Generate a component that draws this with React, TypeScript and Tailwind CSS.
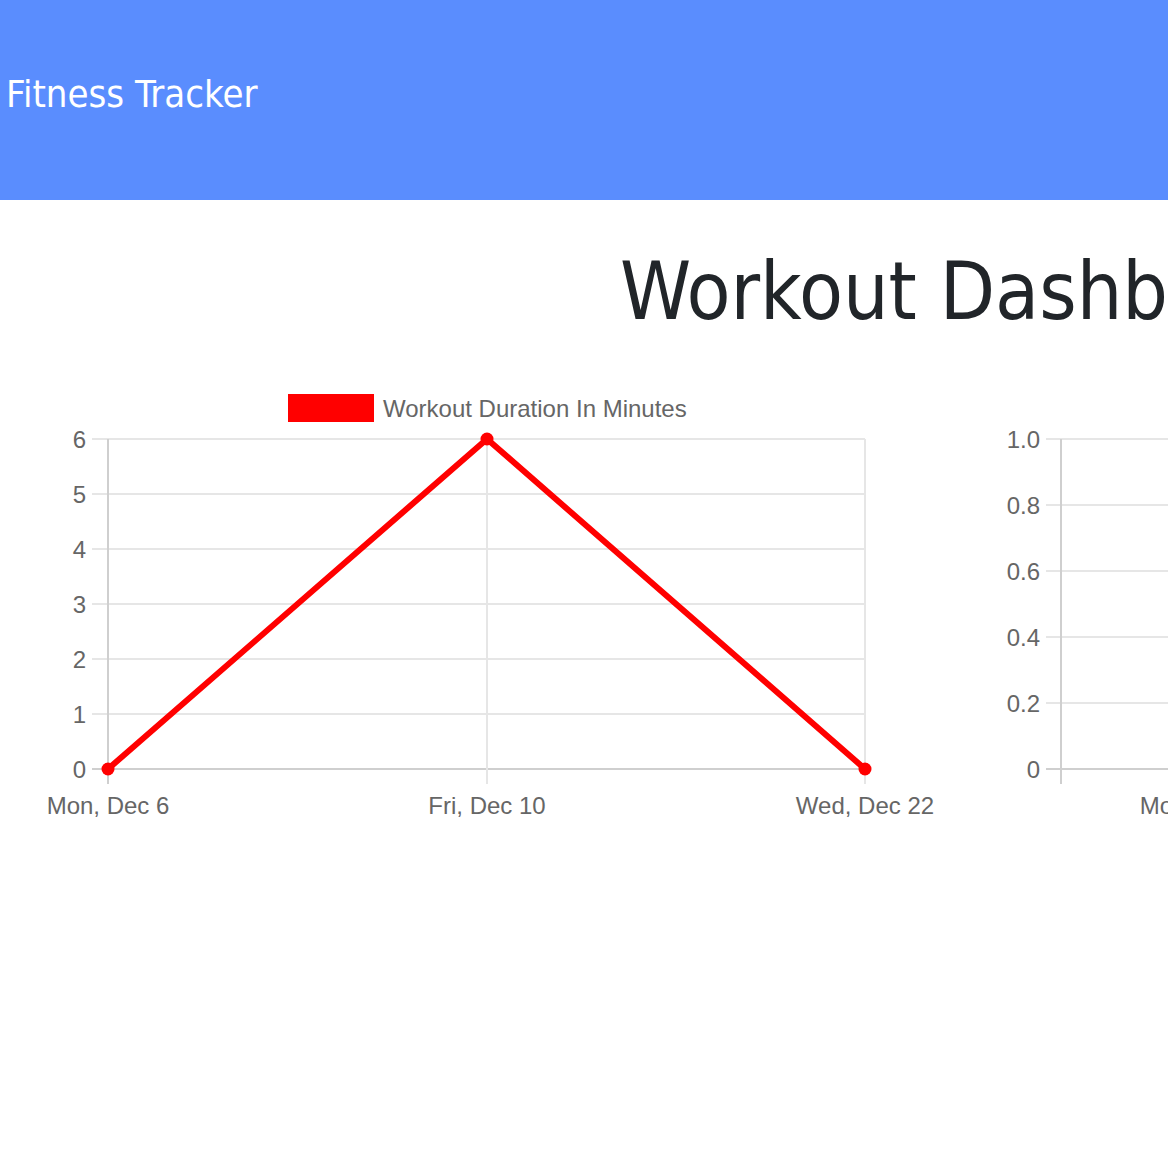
const days = ["Mon, Dec 6", "Fri, Dec 10", "Wed, Dec 22"];

const tickFont = { fontFamily: '"Liberation Sans", Arial, sans-serif', fontSize: 24, fill: "#666" };

function DurationChart() {
  const xs = [108, 487, 865];
  const ys = [0, 1, 2, 3, 4, 5, 6];
  const y = (v: number) => 769 - v * 55;
  const data = [0, 6, 0];
  const pts = data.map((v, i) => `${xs[i]},${y(v)}`).join(" ");
  return (
    <svg width={975} height={460} viewBox="0 370 975 460" className="shrink-0">
      <rect x={288} y={394} width={86} height={28} fill="#ff0000" />
      <text x={383} y={408} dominantBaseline="central" {...tickFont}>
        Workout Duration In Minutes
      </text>
      {ys.map((v) => (
        <line key={v} x1={92} x2={865} y1={y(v)} y2={y(v)} stroke={v === 0 ? "#cfcfcf" : "#e6e6e6"} strokeWidth={2} />
      ))}
      {xs.map((x, i) => (
        <line key={x} x1={x} x2={x} y1={439} y2={784} stroke={i === 0 ? "#cfcfcf" : "#e6e6e6"} strokeWidth={2} />
      ))}
      {ys.map((v) => (
        <text key={v} x={86} y={y(v)} textAnchor="end" dominantBaseline="central" {...tickFont}>
          {v}
        </text>
      ))}
      {xs.map((x, i) => (
        <text key={x} x={x} y={805} textAnchor="middle" dominantBaseline="central" {...tickFont}>
          {days[i]}
        </text>
      ))}
      <polyline points={pts} fill="none" stroke="#ff0000" strokeWidth={6} strokeLinejoin="round" />
      {data.map((v, i) => (
        <circle key={i} cx={xs[i]} cy={y(v)} r={6.5} fill="#ff0000" />
      ))}
    </svg>
  );
}

function WeightChart() {
  const ticks = ["1.0", "0.8", "0.6", "0.4", "0.2", "0"];
  const centers = [1201, 1481, 1761];
  return (
    <svg width={975} height={460} viewBox="975 370 975 460" className="shrink-0">
      {ticks.map((t, i) => (
        <line key={t} x1={1046} x2={1901} y1={439 + i * 66} y2={439 + i * 66} stroke={t === "0" ? "#cfcfcf" : "#e6e6e6"} strokeWidth={2} />
      ))}
      <line x1={1061} x2={1061} y1={439} y2={784} stroke="#cfcfcf" strokeWidth={2} />
      {ticks.map((t, i) => (
        <text key={t} x={1040} y={439 + i * 66} textAnchor="end" dominantBaseline="central" {...tickFont}>
          {t}
        </text>
      ))}
      {centers.map((x, i) => (
        <text key={x} x={x} y={805} textAnchor="middle" dominantBaseline="central" {...tickFont}>
          {days[i]}
        </text>
      ))}
    </svg>
  );
}

export default function App() {
  return (
    <div className="w-full min-h-[1168px] overflow-hidden bg-white">
      <div className="w-[1950px]">
        <header className="h-[200px] bg-[#5a8dfe] pl-[6px] pt-[68px]">
          <span
            className="text-white text-[38px] leading-[52px]"
            style={{ fontFamily: '"DejaVu Sans Condensed", "DejaVu Sans", sans-serif' }}
          >
            Fitness Tracker
          </span>
        </header>

        <h1
          className="mt-[52px] text-center text-[80px] leading-none text-[#212529]"
          style={{ fontFamily: '"DejaVu Sans Condensed", "DejaVu Sans", sans-serif' }}
        >
          Workout Dashboard
        </h1>

        <div className="mt-[38px] flex">
          <DurationChart />
          <WeightChart />
        </div>
      </div>
    </div>
  );
}
